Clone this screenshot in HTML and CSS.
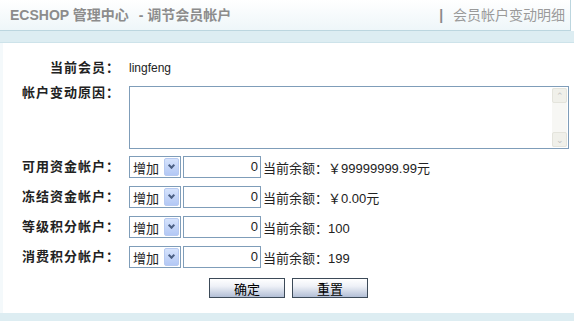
FILE: index.html
```html
<!DOCTYPE html>
<html lang="zh-CN">
<head>
    <meta charset="utf-8">
    <title>ECSHOP 管理中心 - 调节会员帐户</title>
    <link rel="stylesheet" href="styles.css">
</head>
<body>
    <div class="header">
        <span class="title">ECSHOP 管理中心<span class="sub"> - 调节会员帐户</span></span>
        <span class="action"><span class="bar">|</span> 会员帐户变动明细</span>
    </div>
    <div class="band"></div>
    <div class="main">
        <div class="form">
            <div class="label">当前会员：</div>
            <div class="value name">lingfeng</div>

            <div class="label top">帐户变动原因：</div>
            <div class="value">
                <div class="memo">
                    <div class="scroll">
                        <span class="sbtn">&#x2303;</span>
                        <span class="sbtn">&#x2304;</span>
                    </div>
                </div>
            </div>

            <div class="label">可用资金帐户：</div>
            <div class="value row">
                <span class="select">增加<span class="arrow"></span></span>
                <span class="num">0</span>
                <span class="bal">当前余额：￥99999999.99元</span>
            </div>

            <div class="label">冻结资金帐户：</div>
            <div class="value row">
                <span class="select">增加<span class="arrow"></span></span>
                <span class="num">0</span>
                <span class="bal">当前余额：￥0.00元</span>
            </div>

            <div class="label">等级积分帐户：</div>
            <div class="value row">
                <span class="select">增加<span class="arrow"></span></span>
                <span class="num">0</span>
                <span class="bal">当前余额：100</span>
            </div>

            <div class="label">消费积分帐户：</div>
            <div class="value row">
                <span class="select">增加<span class="arrow"></span></span>
                <span class="num">0</span>
                <span class="bal">当前余额：199</span>
            </div>
        </div>
        <div class="buttons">
            <button class="btn">确定</button>
            <button class="btn">重置</button>
        </div>
    </div>
    <div class="band"></div>
</body>
</html>
```

FILE: styles.css
```css
body {
    margin: 0;
    font-family: Arial, "Liberation Sans", "Noto Sans CJK SC", sans-serif;
    font-size: 13px;
    color: #222;
    background: #fff;
}

.header {
    height: 30px;
    margin-right: 3px;
    padding: 0 0 0 10px;
    display: flex;
    align-items: center;
    justify-content: space-between;
    background: linear-gradient(#ffffff, #eef6f9);
    border-bottom: 1px solid #bcd6df;
    border-right: 1px solid #bcd6df;
}

.title {
    font-size: 14px;
    font-weight: bold;
    color: #8c8c8c;
    margin-top: -2px;
}

.sub {
    margin-left: 6px;
}

.action {
    font-size: 14px;
    color: #9a9a9a;
    padding-right: 5px;
    margin-top: -2px;
}

.bar {
    color: #8a8a8a;
    font-weight: bold;
    margin-right: 6px;
}

.band {
    height: 11px;
    background: #ddedf2;
    border-bottom: 1px solid #cde3ea;
}

.main {
    padding-top: 14px;
    border-left: 3px solid #f4f9fb;
    box-sizing: border-box;
    height: 270px;
}

.form {
    display: grid;
    grid-template-columns: 119px 1fr;
    column-gap: 7px;
    row-gap: 8px;
    align-items: center;
}

.label {
    text-align: right;
    font-weight: bold;
    color: #222;
    line-height: 22px;
    letter-spacing: 1px;
    padding-right: 2px;
}

.label.top {
    align-self: start;
    line-height: 14px;
    margin-top: -1px;
}

.value.name {
    line-height: 22px;
    font-size: 12px;
    color: #222;
}

.memo {
    width: 438px;
    height: 61px;
    border: 1px solid #7f9db9;
    background: #fff;
    position: relative;
    margin-top: -1px;
    margin-bottom: -1px;
}

.scroll {
    position: absolute;
    right: 1px;
    top: 1px;
    bottom: 1px;
    width: 15px;
    background: #f7f7f4;
    display: flex;
    flex-direction: column;
    justify-content: space-between;
}

.sbtn {
    height: 15px;
    line-height: 15px;
    font-size: 9px;
    text-align: center;
    color: #c4c4c4;
    background: #f0f0ea;
    border: 1px solid #e4e4dc;
    box-sizing: border-box;
    border-radius: 2px;
}

.row {
    display: flex;
    align-items: center;
    gap: 2px;
}

.select {
    width: 52px;
    height: 22px;
    box-sizing: border-box;
    border: 1px solid #7f9db9;
    display: flex;
    align-items: center;
    justify-content: space-between;
    padding: 0 1px 0 3px;
    background: #fff;
}

.arrow {
    width: 15px;
    height: 18px;
    background: linear-gradient(#d6e3fc, #b3c8f5);
    border: 1px solid #b7caf1;
    box-sizing: border-box;
    border-radius: 2px;
    position: relative;
}

.arrow::after {
    content: "";
    position: absolute;
    left: 4px;
    top: 4px;
    width: 3px;
    height: 3px;
    border-right: 2px solid #4d6185;
    border-bottom: 2px solid #4d6185;
    transform: rotate(45deg);
}

.num {
    width: 78px;
    height: 22px;
    box-sizing: border-box;
    border: 1px solid #7f9db9;
    text-align: right;
    padding-right: 2px;
    line-height: 20px;
    background: #fff;
}

.bal {
    color: #222;
}

.buttons {
    display: flex;
    justify-content: center;
    gap: 7px;
    margin-top: 10px;
}

.btn {
    width: 76px;
    height: 20px;
    padding: 0;
    font-family: Arial, "Liberation Sans", "Noto Sans CJK SC", sans-serif;
    font-size: 13px;
    color: #000;
    border: 1px solid #3c4a58;
    background: linear-gradient(#ffffff 0%, #eef1f7 40%, #b3bfd6 100%);
}
```
